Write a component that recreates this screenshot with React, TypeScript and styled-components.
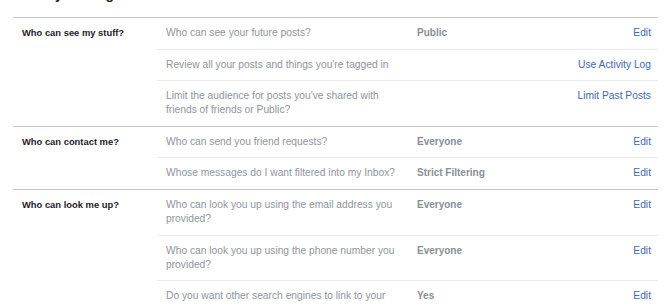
import styled, { createGlobalStyle } from 'styled-components';

const GlobalStyle = createGlobalStyle`
  html, body {
    margin: 0;
    padding: 0;
    background: #ffffff;
  }
  body {
    font-family: 'Liberation Sans', Arial, Helvetica, sans-serif;
    overflow: hidden;
  }
`;

const Page = styled.div`
  display: flex;
  flex-direction: column;
  width: 645px;
  margin-left: 13px;
`;

const Heading = styled.h2`
  margin: -15px 0 14px;
  font-size: 14px;
  line-height: 18px;
  font-weight: bold;
  color: #1d2129;
`;

const Section = styled.section`
  display: grid;
  grid-template-columns: 144px 1fr;
  border-top: 1px solid #c4c6ca;
`;

const Label = styled.div`
  padding: 8px 0 0 9px;
  font-size: 9.4px;
  line-height: 14px;
  font-weight: bold;
  color: #1d2129;
`;

const Rows = styled.div`
  display: flex;
  flex-direction: column;
`;

const Row = styled.div`
  display: grid;
  grid-template-columns: 243px 1fr auto;
  column-gap: 8px;
  align-items: start;
  padding: 8px 7px 8.6px 9px;
  font-size: 10.25px;
  line-height: 14px;

  & + & {
    border-top: 1px solid #e9ebee;
  }
`;

const Question = styled.div`
  color: #90949c;
`;

const Value = styled.div`
  font-weight: bold;
  font-size: 10px;
  color: #8a8e96;
`;

const Action = styled.a`
  color: #4267b2;
  text-decoration: none;
  text-align: right;
  white-space: nowrap;
  cursor: pointer;
`;

type Item = { q: string; value?: string; action: string };
type Group = { label: string; items: Item[] };

const groups: Group[] = [
  {
    label: 'Who can see my stuff?',
    items: [
      { q: 'Who can see your future posts?', value: 'Public', action: 'Edit' },
      { q: "Review all your posts and things you're tagged in", action: 'Use Activity Log' },
      {
        q: "Limit the audience for posts you've shared with friends of friends or Public?",
        action: 'Limit Past Posts',
      },
    ],
  },
  {
    label: 'Who can contact me?',
    items: [
      { q: 'Who can send you friend requests?', value: 'Everyone', action: 'Edit' },
      { q: 'Whose messages do I want filtered into my Inbox?', value: 'Strict Filtering', action: 'Edit' },
    ],
  },
  {
    label: 'Who can look me up?',
    items: [
      {
        q: 'Who can look you up using the email address you provided?',
        value: 'Everyone',
        action: 'Edit',
      },
      {
        q: 'Who can look you up using the phone number you provided?',
        value: 'Everyone',
        action: 'Edit',
      },
      {
        q: 'Do you want other search engines to link to your timeline?',
        value: 'Yes',
        action: 'Edit',
      },
    ],
  },
];

function App() {
  return (
    <>
      <GlobalStyle />
      <Page>
        <Heading>Privacy Settings and Tools</Heading>
        {groups.map((g) => (
          <Section key={g.label}>
            <Label>{g.label}</Label>
            <Rows>
              {g.items.map((it) => (
                <Row key={it.q}>
                  <Question>{it.q}</Question>
                  <Value>{it.value}</Value>
                  <Action>{it.action}</Action>
                </Row>
              ))}
            </Rows>
          </Section>
        ))}
      </Page>
    </>
  );
}

export default App;
